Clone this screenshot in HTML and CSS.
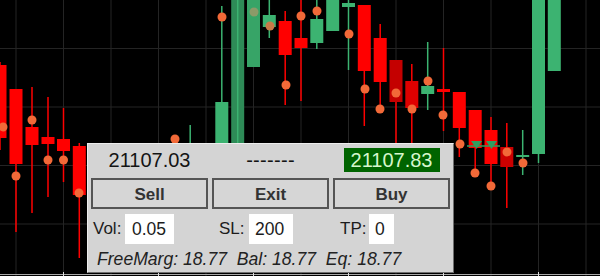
FILE: index.html
```html
<!DOCTYPE html>
<html>
<head>
<meta charset="utf-8">
<link rel="stylesheet" href="styles.css">
</head>
<body>
<div class="stage">
  <svg class="chart" width="600" height="276" viewBox="0 0 600 276" xmlns="http://www.w3.org/2000/svg">
    <g stroke="#242424" stroke-width="1">
      <line x1="16" y1="0" x2="16" y2="276"/>
      <line x1="63.5" y1="0" x2="63.5" y2="276"/>
      <line x1="111" y1="0" x2="111" y2="276"/>
      <line x1="158.5" y1="0" x2="158.5" y2="276"/>
      <line x1="206" y1="0" x2="206" y2="276"/>
      <line x1="253.5" y1="0" x2="253.5" y2="276"/>
      <line x1="301" y1="0" x2="301" y2="276"/>
      <line x1="348.5" y1="0" x2="348.5" y2="276"/>
      <line x1="396" y1="0" x2="396" y2="276"/>
      <line x1="443.5" y1="0" x2="443.5" y2="276"/>
      <line x1="491" y1="0" x2="491" y2="276"/>
      <line x1="538.5" y1="0" x2="538.5" y2="276"/>
      <line x1="586" y1="0" x2="586" y2="276"/>
      <line x1="0" y1="48.5" x2="600" y2="48.5"/>
      <line x1="0" y1="107" x2="600" y2="107"/>
      <line x1="0" y1="165.5" x2="600" y2="165.5"/>
      <line x1="0" y1="224" x2="600" y2="224"/>
    </g>
    <!-- red wicks -->
    <g stroke="#ff0000" stroke-width="1.5">
      <line x1="0" y1="62" x2="0" y2="150"/>
      <line x1="16" y1="89" x2="16" y2="232"/>
      <line x1="32" y1="87" x2="32" y2="213"/>
      <line x1="48" y1="97" x2="48" y2="197"/>
      <line x1="63.5" y1="108" x2="63.5" y2="182"/>
      <line x1="79.3" y1="143" x2="79.3" y2="258"/>
      <line x1="285.2" y1="11" x2="285.2" y2="105"/>
      <line x1="301" y1="0" x2="301" y2="101"/>
      <line x1="364.3" y1="5" x2="364.3" y2="126"/>
      <line x1="380.2" y1="24" x2="380.2" y2="112"/>
      <line x1="396" y1="60" x2="396" y2="143"/>
      <line x1="411.8" y1="64" x2="411.8" y2="150"/>
      <line x1="443.5" y1="48" x2="443.5" y2="131"/>
      <line x1="459.3" y1="92" x2="459.3" y2="157"/>
      <line x1="475.2" y1="110" x2="475.2" y2="175"/>
      <line x1="491" y1="117" x2="491" y2="187"/>
      <line x1="506.8" y1="123" x2="506.8" y2="208"/>
    </g>
    <!-- green wicks -->
    <g stroke="#3cb371" stroke-width="1.5">
      <line x1="190.2" y1="125" x2="190.2" y2="150"/>
      <line x1="221.8" y1="6" x2="221.8" y2="150"/>
      <line x1="269.3" y1="0" x2="269.3" y2="38"/>
      <line x1="316.8" y1="0" x2="316.8" y2="49"/>
      <line x1="348.5" y1="0" x2="348.5" y2="70"/>
      <line x1="427.7" y1="42" x2="427.7" y2="110"/>
      <line x1="522.7" y1="130" x2="522.7" y2="175"/>
      <line x1="538.5" y1="0" x2="538.5" y2="163"/>
    </g>
    <!-- red bodies -->
    <g fill="#ff0000">
      <rect x="-6.5" y="65" width="13" height="73"/>
      <rect x="9.5" y="89" width="13" height="75"/>
      <rect x="25.5" y="127" width="13" height="18"/>
      <rect x="41.5" y="137" width="13" height="7"/>
      <rect x="57" y="139" width="13" height="12"/>
      <rect x="72.8" y="146" width="13" height="49"/>
      <rect x="278.7" y="21" width="13" height="34"/>
      <rect x="294.5" y="38" width="13" height="10"/>
      <rect x="357.8" y="5" width="13" height="66"/>
      <rect x="373.7" y="38" width="13" height="44"/>
      <rect x="437" y="89" width="13" height="3"/>
      <rect x="452.8" y="92" width="13" height="36"/>
      <rect x="468.7" y="110" width="13" height="38"/>
      <rect x="484.5" y="130" width="13" height="34"/>
    </g>
    <rect x="389.5" y="60" width="13" height="42" fill="#c40000"/>
    <rect x="405.3" y="81" width="13" height="27" fill="#de0000"/>
    <rect x="500.3" y="147" width="13" height="20" fill="#cc0000"/>
    <!-- green bodies -->
    <g fill="#3cb371">
      <rect x="215.3" y="102" width="13" height="50"/>
      <rect x="262.8" y="15" width="13" height="12"/>
      <rect x="310.3" y="19" width="13" height="24"/>
      <rect x="326.2" y="0" width="13" height="31"/>
      <rect x="342" y="3" width="13" height="4"/>
      <rect x="421.2" y="86" width="13" height="8"/>
      <rect x="516.2" y="155" width="13" height="2"/>
      <rect x="532" y="0" width="13" height="154"/>
      <rect x="547.8" y="0" width="13" height="71"/>
    </g>
    <rect x="231.2" y="0" width="13" height="152" fill="#2e8b57"/>
    <line x1="237.7" y1="0" x2="237.7" y2="152" stroke="#3cb371" stroke-width="1.5"/>
    <rect x="247" y="0" width="13" height="67" fill="#37a467"/>
    <!-- markers -->
    <g fill="#f26938">
      <circle cx="3" cy="127" r="4.5"/>
      <circle cx="16" cy="176" r="4.5"/>
      <circle cx="32" cy="120" r="4.5"/>
      <circle cx="48" cy="160" r="4.5"/>
      <circle cx="63.5" cy="160" r="4.5"/>
      <circle cx="79" cy="193" r="4.5"/>
      <circle cx="175" cy="139" r="4.5"/>
      <circle cx="222" cy="17" r="4.5"/>
      <circle cx="286" cy="85" r="4.5"/>
      <circle cx="301" cy="16" r="4.5"/>
      <circle cx="317" cy="11" r="4.5"/>
      <circle cx="349" cy="34" r="4.5"/>
      <circle cx="365" cy="89" r="4.5"/>
      <circle cx="380" cy="109" r="4.5"/>
      <circle cx="396" cy="93" r="4.5"/>
      <circle cx="412" cy="109" r="4.5"/>
      <circle cx="428" cy="81" r="4.5"/>
      <circle cx="443" cy="115" r="4.5"/>
      <circle cx="460" cy="144" r="4.5"/>
      <circle cx="475" cy="173" r="4.5"/>
      <circle cx="491" cy="186" r="4.5"/>
      <circle cx="507" cy="152" r="4.5"/>
      <circle cx="523" cy="163" r="4.5"/>
    </g>
    <circle cx="254" cy="12" r="4.5" fill="#8c9a68"/>
    <circle cx="270" cy="26" r="4.5" fill="#c87a48"/>
    <g fill="#2f9e5f">
      <line x1="467" y1="146" x2="500" y2="146" stroke="#2f9e5f" stroke-width="1.5"/>
      <polygon points="471,141 482,141 476.5,149"/>
      <polygon points="486,141 497,141 491.5,149"/>
    </g>
    <!-- bottom axis -->
    <rect x="0" y="274" width="600" height="1" fill="#a8a8a8"/>
    <g fill="#dcdcdc">
      <rect x="63" y="272" width="1" height="4"/>
      <rect x="158" y="272" width="1" height="4"/>
      <rect x="253" y="272" width="1" height="4"/>
      <rect x="348" y="272" width="1" height="4"/>
      <rect x="443" y="272" width="1" height="4"/>
      <rect x="538" y="272" width="1" height="4"/>
    </g>
  </svg>

  <div class="panel">
    <div class="row prices">
      <div class="cell"><span class="price">21107.03</span></div>
      <div class="cell"><span class="price dashes">-------</span></div>
      <div class="cell"><span class="price ask">21107.83</span></div>
    </div>
    <div class="row buttons">
      <div class="btn">Sell</div>
      <div class="btn">Exit</div>
      <div class="btn">Buy</div>
    </div>
    <div class="inputs">
      <span class="lbl lbl-vol">Vol:</span>
      <span class="field field-vol">0.05</span>
      <span class="lbl lbl-sl">SL:</span>
      <span class="field field-sl">200</span>
      <span class="lbl lbl-tp">TP:</span>
      <span class="field field-tp">0</span>
    </div>
    <div class="account">FreeMarg: 18.77&nbsp; Bal: 18.77&nbsp; Eq: 18.77</div>
  </div>
</div>
</body>
</html>
```
FILE: styles.css
```css
* { box-sizing: border-box; }
html, body { margin: 0; padding: 0; background: #000; }
.stage {
  position: relative;
  width: 600px;
  height: 276px;
  overflow: hidden;
  background: #000;
  font-family: "Liberation Sans", Arial, sans-serif;
}
.chart { display: block; }
.panel {
  position: absolute;
  left: 87px;
  top: 143px;
  width: 367px;
  height: 130px;
  background: #d4d4d4;
  border: 1px solid;
  border-color: #ededed #6e6e6e #6e6e6e #ededed;
  padding: 4px 3px 0 3px;
  display: flex;
  flex-direction: column;
}
.row {
  display: grid;
  grid-template-columns: repeat(3, 1fr);
  column-gap: 4px;
}
.prices { height: 24px; margin-bottom: 6px; }
.cell { display: flex; justify-content: center; align-items: center; }
.price {
  font-size: 20px;
  line-height: 24px;
  color: #141414;
  white-space: nowrap;
}
.dashes { letter-spacing: 0.3px; }
.ask {
  background: #006400;
  color: #d6f7cc;
  width: 96px;
  height: 24px;
  text-align: center;
}
.buttons { height: 31px; margin-bottom: 5px; }
.btn {
  height: 31px;
  border: 2px solid #555;
  background: #d6d6d6;
  text-align: center;
  font-weight: bold;
  font-size: 17px;
  line-height: 25px;
  padding-top: 2px;
  color: #333;
}
.inputs {
  display: flex;
  height: 30px;
  margin-bottom: 4px;
  font-size: 17px;
  line-height: 30px;
  color: #1c1c1c;
}
.lbl { white-space: nowrap; }
.lbl-vol { margin-left: 2px; width: 30px; }
.lbl-sl { margin-left: 45px; width: 29px; }
.lbl-tp { margin-left: 47px; width: 29px; }
.field {
  background: #fff;
  height: 30px;
  padding-left: 7px;
  font-size: 17.5px;
}
.field-vol { margin-left: 2px; width: 49px; }
.field-sl { margin-left: 1px; width: 44px; padding-left: 6px; }
.field-tp { margin-left: 0; width: 25px; padding-left: 6px; }
.account {
  height: 22px;
  line-height: 22px;
  padding-left: 6px;
  font-size: 17.6px;
  font-style: italic;
  color: #222;
  white-space: nowrap;
}
```
